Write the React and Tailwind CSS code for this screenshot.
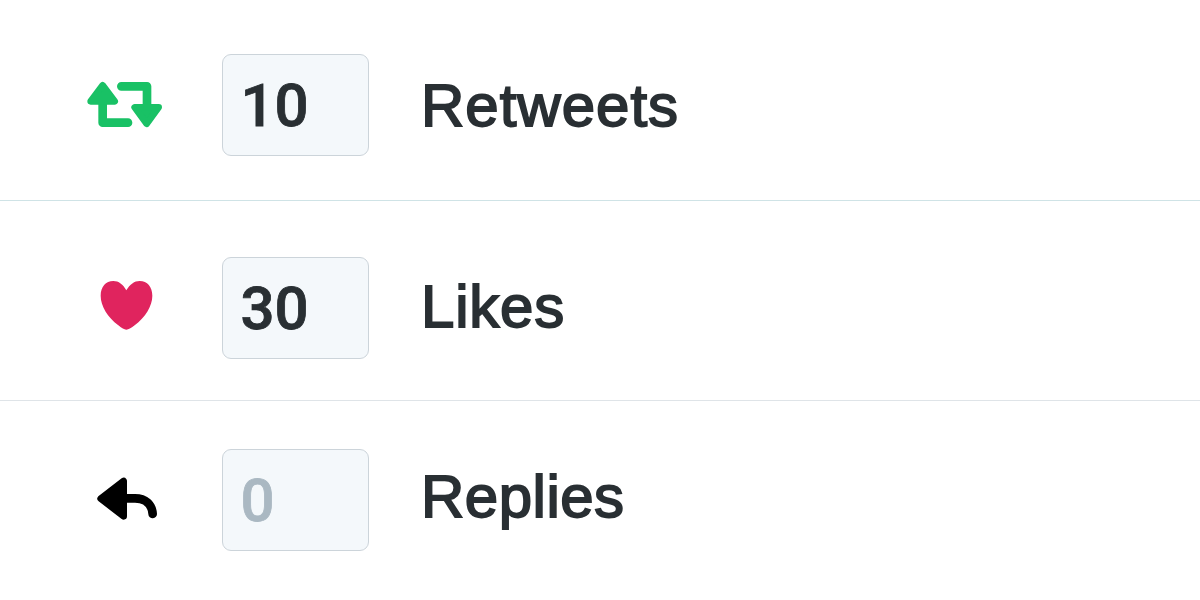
import clsx from 'clsx';

function RetweetIcon() {
  return (
    <svg viewBox="0 0 270 210" className="w-[90px] h-[70px] text-[#19c165]">
      <g fill="none" stroke="currentColor" strokeWidth="26" strokeLinecap="round" strokeLinejoin="round">
        <path d="M68 98v60h76" />
        <path d="M124 49h77v60" />
      </g>
      <g fill="currentColor" stroke="currentColor" strokeWidth="20" strokeLinejoin="round">
        <path d="M68 46L104 94H32Z" />
        <path d="M200 161L164 112h72Z" />
      </g>
    </svg>
  );
}

function HeartIcon() {
  return (
    <svg viewBox="0 0 270 210" className="w-[90px] h-[70px]">
      <path
        fill="#e0245e"
        d="M124 61C135 43 148 33 164 33C187 33 202 51 202 77C202 108 181 142 149 166C137 175 131 179 124 179C117 179 111 175 100 166C68 142 47 108 47 77C47 51 62 33 85 33C101 33 114 43 124 61Z"
      />
    </svg>
  );
}

function ReplyIcon() {
  return (
    <svg viewBox="0 0 270 210" className="w-[90px] h-[70px]">
      <path d="M116 48V154L47 101Z" stroke="black" strokeWidth="20" strokeLinejoin="round" />
      <path
        d="M116 100H150C181 100 201 118 203 147"
        fill="none"
        stroke="black"
        strokeWidth="26"
        strokeLinecap="round"
      />
    </svg>
  );
}

const rows = [
  {
    label: 'Retweets',
    value: '10',
    icon: <RetweetIcon />,
    row: 'h-[201px] border-b border-[#cfe3e6]',
    iconTop: 'mt-[70px] ml-20',
    boxTop: 'mt-[54px] ml-[52px] pt-[21px]',
    labelTop: 'mt-[76px] tracking-[1px]',
  },
  {
    label: 'Likes',
    value: '30',
    icon: <HeartIcon />,
    row: 'h-[200px] border-b border-[#dfe4e8]',
    iconTop: 'mt-[69px] ml-[85px]',
    boxTop: 'mt-[56px] ml-[47px] pt-[21px]',
    labelTop: 'mt-[76px] tracking-[0.8px]',
  },
  {
    label: 'Replies',
    value: '0',
    empty: true,
    icon: <ReplyIcon />,
    row: 'h-[199px]',
    iconTop: 'mt-[64px] ml-[85px]',
    boxTop: 'mt-[48px] ml-[47px] pt-[21px]',
    labelTop: 'mt-[66px] tracking-[0.5px]',
  },
];

export default function App() {
  return (
    <div className="w-[1200px] h-[600px] bg-white overflow-hidden font-['Liberation_Sans',Arial,sans-serif] text-[60px] leading-[60px] text-[#292f33]">
      {rows.map((item) => (
        <div key={item.label} className={clsx('flex items-start', item.row)}>
          <div className={clsx('shrink-0', item.iconTop)}>{item.icon}</div>
          <div
            className={clsx(
              "w-[147px] h-[102px] shrink-0 rounded-[9px] border border-[#ccd4da] bg-[#f4f8fb] pl-[17.5px] font-['Roboto',Arial,sans-serif] font-medium [-webkit-text-stroke:0.8px_currentColor]",
              item.boxTop,
              item.empty && 'text-[#aab8c2]'
            )}
          >
            {item.value}
          </div>
          <div
            className={clsx(
              'ml-[52px] [-webkit-text-stroke:1.8px_currentColor]',
              item.labelTop
            )}
          >
            {item.label}
          </div>
        </div>
      ))}
    </div>
  );
}
